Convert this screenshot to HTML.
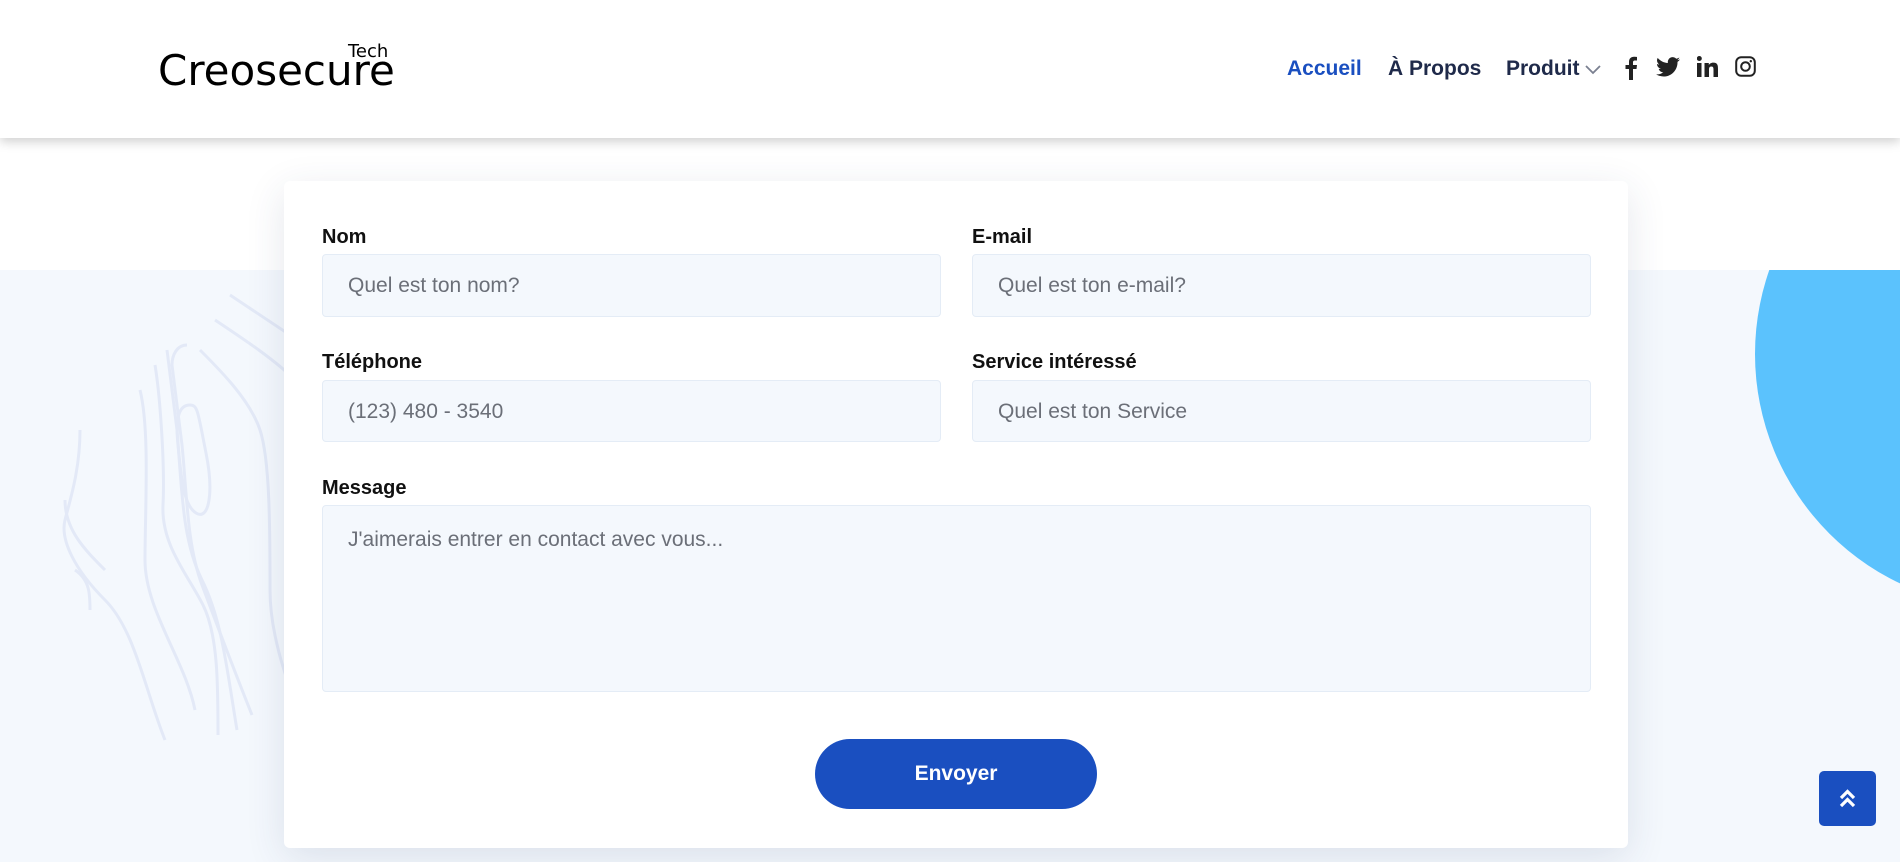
<!DOCTYPE html>
<html><head><meta charset="utf-8"><style>
*{margin:0;padding:0;box-sizing:border-box}
body{width:1900px;height:862px;overflow:hidden;background:#fff;font-family:"Liberation Sans",sans-serif;position:relative}
.hdr{position:absolute;left:0;top:0;width:1900px;height:138px;background:#fff;box-shadow:0 4px 10px rgba(0,0,0,.18);z-index:5}
.logo{position:absolute;left:158px;top:50px;font-family:"DejaVu Sans",sans-serif;font-size:42px;letter-spacing:0;color:#000;line-height:1}
.logo small{position:absolute;left:190px;top:-7px;font-size:18px;letter-spacing:0}
.nav{position:absolute;top:57px;font-size:21px;font-weight:bold;color:#1f2a4a}
.sec{position:absolute;left:0;top:270px;width:1900px;height:592px;background:#f4f8fd;overflow:hidden}
.card{position:absolute;left:284px;top:181px;width:1344px;height:667px;background:#fff;border-radius:6px;box-shadow:0 10px 40px rgba(40,60,100,.12);z-index:3}
.lab{position:absolute;font-size:20px;font-weight:bold;color:#111}
.inp{position:absolute;background:#f4f8fd;border:1px solid #e4ecf6;border-radius:4px;font-size:21px;color:#6b6f78;padding-left:25px;line-height:62px}
.btn{position:absolute;left:531px;top:558px;width:282px;height:70px;border-radius:35px;background:#1a4fc0;color:#fff;font-size:21px;font-weight:bold;text-align:center;line-height:70px}
.up{position:absolute;left:1819px;top:771px;width:57px;height:55px;background:#1a4fc0;border-radius:5px;z-index:6}
</style></head><body>
<div class="hdr">
<div class="logo">Creosecure<small>Tech</small></div>
<div class="nav" style="left:1287px;color:#1a4fc0">Accueil</div>
<div class="nav" style="left:1388px">À Propos</div>
<div class="nav" style="left:1506px">Produit</div>
<svg style="position:absolute;left:1584px;top:64px" width="18" height="12" viewBox="0 0 18 12"><path d="M2 2l7 7 7-7" fill="none" stroke="#7a8090" stroke-width="1.8"/></svg>
<svg style="position:absolute;left:1624px;top:55px" width="14" height="25" viewBox="0 0 14 25"><path d="M9 25V14h3.5l.5-4H9V7.5c0-1.2.4-2 2-2h2V2c-.4 0-1.6-.2-3-.2-3 0-5 1.8-5 5.2V10H1.5v4H5v11z" fill="#222"/></svg>
<svg style="position:absolute;left:1656px;top:57px" width="24" height="20" viewBox="0 0 24 20"><path d="M24 2.4c-.9.4-1.8.6-2.8.8 1-.6 1.8-1.6 2.2-2.7-1 .6-2 1-3.1 1.2A4.9 4.9 0 0 0 11.9 6C7.8 5.8 4.2 3.9 1.7.9c-1.4 2.3-.6 5.1 1.5 6.6-.8 0-1.6-.2-2.2-.6 0 2.4 1.7 4.4 3.9 4.9-.7.2-1.5.2-2.2.1.6 2 2.4 3.4 4.6 3.4A9.9 9.9 0 0 1 0 17.300 14 14 0 0 0 7.5 19.5c9.1 0 14.3-7.7 14-14.6 1-.7 1.8-1.5 2.5-2.5z" fill="#222"/></svg>
<svg style="position:absolute;left:1697px;top:56px" width="21" height="21" viewBox="0 0 21 21"><rect x="0" y="7" width="4.5" height="14" fill="#222"/><circle cx="2.3" cy="2.5" r="2.5" fill="#222"/><path d="M7.5 7h4.3v2c.7-1.2 2.2-2.4 4.5-2.4 4.5 0 4.7 3 4.7 6.5V21h-4.5v-7c0-1.7 0-3.5-2.2-3.5S12 12.2 12 14v7H7.5z" fill="#222"/></svg>
<svg style="position:absolute;left:1735px;top:56px" width="21" height="21" viewBox="0 0 21 21"><rect x="1.2" y="1.2" width="18.6" height="18.6" rx="5" fill="none" stroke="#222" stroke-width="2"/><circle cx="10.5" cy="10.5" r="4.3" fill="none" stroke="#222" stroke-width="2"/><circle cx="15.8" cy="5.2" r="1.2" fill="#222"/></svg>
</div>
<div class="sec">
<svg style="position:absolute;left:50px;top:0" width="300" height="500" viewBox="0 0 300 500" fill="none" stroke="#e3e9f7" stroke-width="3">
<path d="M150 80c20 20 50 50 60 80s10 100 10 160 30 120 40 160"/>
<path d="M137 75c-10 0-15 10-15 20l10 80c5 50 5 100 20 140s30 80 50 130"/>
<path d="M117 80l10 80c5 60 5 110 25 150s25 90 35 150"/>
<path d="M105 95c5 30 10 100 8 140s25 70 40 100 15 80 15 130"/>
<path d="M90 120c10 40 5 120 5 170s40 100 50 150"/>
<path d="M140 135c-10 0-15 10-12 40s5 60 18 68 18-20 10-60-8-48-16-48z"/>
<path d="M30 160c0 40-10 70-15 90s10 50 40 80 40 90 60 140"/>
<path d="M15 230c0 30 20 50 40 70"/>
<path d="M25 300c15 10 15 25 15 40"/>
<path d="M165 50c30 20 60 40 80 60s30 60 25 120-5 100 10 140"/>
<path d="M180 25c30 20 60 40 90 60"/>
</svg>
<div style="position:absolute;left:1755px;top:-170px;width:508px;height:508px;border-radius:50%;background:#5bc2fd"></div>
</div>
<div class="card">
<div class="lab" style="left:38px;top:45px">Nom</div>
<div class="inp" style="left:38px;top:73px;width:619px;height:63px">Quel est ton nom?</div>
<div class="lab" style="left:688px;top:45px">E-mail</div>
<div class="inp" style="left:688px;top:73px;width:619px;height:63px">Quel est ton e-mail?</div>
<div class="lab" style="left:38px;top:170px">Téléphone</div>
<div class="inp" style="left:38px;top:199px;width:619px;height:62px">(123) 480 - 3540</div>
<div class="lab" style="left:688px;top:170px">Service intéressé</div>
<div class="inp" style="left:688px;top:199px;width:619px;height:62px">Quel est ton Service</div>
<div class="lab" style="left:38px;top:296px">Message</div>
<div class="inp" style="left:38px;top:324px;width:1269px;height:187px;line-height:24px;padding-top:22px">J'aimerais entrer en contact avec vous...</div>
<div class="btn">Envoyer</div>
</div>
<div class="up"><svg width="57" height="55" viewBox="0 0 57 55"><path d="M22 27l6.5-6.5L35 27M22 35l6.5-6.5L35 35" fill="none" stroke="#fff" stroke-width="3.2"/></svg></div>
</body></html>
